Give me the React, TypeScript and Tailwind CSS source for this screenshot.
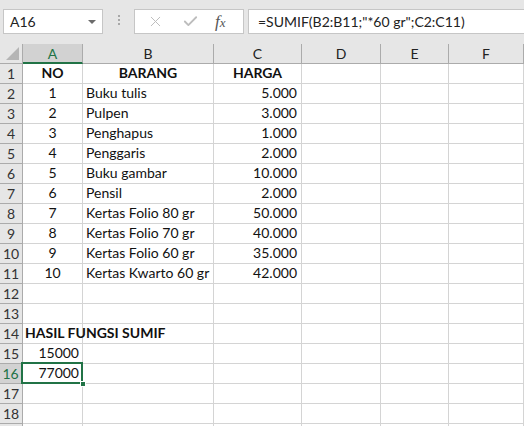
import { Check, X } from "lucide-react";

type Row = {
  a?: string;
  b?: string;
  c?: string;
  kind?: "head" | "label" | "result";
};

const cols = [
  { key: "A", w: "w-[60px]" },
  { key: "B", w: "w-[131px]" },
  { key: "C", w: "w-[88px]" },
  { key: "D", w: "w-[79px]" },
  { key: "E", w: "w-[68px]" },
  { key: "F", w: "flex-1" },
];

const rows: Row[] = [
  { a: "NO", b: "BARANG", c: "HARGA", kind: "head" },
  { a: "1", b: "Buku tulis", c: "5.000" },
  { a: "2", b: "Pulpen", c: "3.000" },
  { a: "3", b: "Penghapus", c: "1.000" },
  { a: "4", b: "Penggaris", c: "2.000" },
  { a: "5", b: "Buku gambar", c: "10.000" },
  { a: "6", b: "Pensil", c: "2.000" },
  { a: "7", b: "Kertas Folio 80 gr", c: "50.000" },
  { a: "8", b: "Kertas Folio 70 gr", c: "40.000" },
  { a: "9", b: "Kertas Folio 60 gr", c: "35.000" },
  { a: "10", b: "Kertas Kwarto 60 gr", c: "42.000" },
  {},
  {},
  { a: "HASIL FUNGSI SUMIF", kind: "label" },
  { a: "15000", kind: "result" },
  { a: "77000", kind: "result" },
  {},
  {},
];

const font = { fontFamily: "Lato, 'Open Sans', sans-serif" };

function FormulaBar() {
  return (
    <div className="flex h-[44px] items-start bg-[#e6e6e6] pt-[9px]">
      <div className="ml-[3px] flex h-[25px] w-[100px] items-center justify-between border border-[#c6c6c6] bg-white pl-[6px] pr-[6px] text-[14px] text-[#222]">
        <span>A16</span>
        <span className="h-0 w-0 border-x-[4px] border-t-[4px] border-x-transparent border-t-[#6b6b6b]" />
      </div>
      <div className="flex w-[31px] flex-col items-center gap-[2px] pt-[6px]">
        <span className="h-[2px] w-[2px] bg-[#a8a8a8]" />
        <span className="h-[2px] w-[2px] bg-[#a8a8a8]" />
        <span className="h-[2px] w-[2px] bg-[#a8a8a8]" />
      </div>
      <div className="flex h-[25px] w-[110px] items-center border border-[#c6c6c6] bg-white">
        <X className="ml-[12px] h-[17px] w-[17px] text-[#bdbdbd]" strokeWidth={1.4} />
        <Check className="ml-[18px] h-[17px] w-[17px] text-[#bdbdbd]" strokeWidth={2.6} />
        <span
          className="ml-[16px] text-[17px] italic text-[#555]"
          style={{ fontFamily: "'Liberation Serif', serif" }}
        >
          f<span className="text-[13px]">x</span>
        </span>
      </div>
      <div className="ml-[4px] flex h-[25px] flex-1 items-center border border-r-0 border-[#c6c6c6] bg-white pl-[9px] text-[14px] text-[#222]">
        =SUMIF(B2:B11;"*60 gr";C2:C11)
      </div>
    </div>
  );
}

function HeaderRow() {
  return (
    <div className="flex h-[20px] bg-[#e6e6e6] text-[14px] leading-[19px]">
      <div className="relative w-[23px] border-r border-b border-[#ababab]">
        <span className="absolute bottom-[3px] right-[3px] h-0 w-0 border-b-[13px] border-l-[13px] border-b-[#b5b5b5] border-l-transparent" />
      </div>
      {cols.map((c) => (
        <div
          key={c.key}
          className={
            c.key === "A"
              ? `${c.w} border-r border-b-2 border-r-[#ababab] border-b-[#217346] bg-[#d2d2d2] text-center text-[#217346]`
              : `${c.w} border-r border-b border-[#ababab] text-center text-[#222]`
          }
        >
          {c.key}
        </div>
      ))}
    </div>
  );
}

function Cell({ row, col, index }: { row: Row; col: string; index: number }) {
  const selected = index === 15 && col === "A";
  let content: React.ReactNode = null;
  let align = "";
  let weight = "";

  if (col === "A" && row.a) {
    content = row.a;
    if (row.kind === "label") {
      align = "justify-start pl-[2px] z-10";
      weight = "font-bold";
    } else if (row.kind === "result") {
      align = "justify-end pr-[3px]";
    } else {
      align = "justify-center";
      weight = row.kind === "head" ? "font-bold" : "";
    }
  }
  if (col === "B" && row.b) {
    content = row.b;
    align = row.kind === "head" ? "justify-center" : "justify-start pl-[3px]";
    weight = row.kind === "head" ? "font-bold" : "";
  }
  if (col === "C" && row.c) {
    content = row.c;
    align = row.kind === "head" ? "justify-center" : "justify-end pr-[4px]";
    weight = row.kind === "head" ? "font-bold" : "";
  }

  const w = cols.find((c) => c.key === col)!.w;
  return (
    <div
      className={`relative flex ${w} items-end whitespace-nowrap border-r border-b border-[#d4d4d4] pb-[1px] ${align} ${weight}`}
    >
      {content}
      {selected && (
        <>
          <span className="pointer-events-none absolute -left-[2px] -top-[2px] h-[22px] w-[62px] border-2 border-[#217346]" />
          <span className="absolute -bottom-[4px] -right-[4px] z-20 h-[6px] w-[6px] border border-white bg-[#217346]" />
        </>
      )}
    </div>
  );
}

export default function App() {
  return (
    <div className="h-[426px] w-[524px] overflow-hidden bg-white" style={font}>
      <FormulaBar />
      <HeaderRow />
      {rows.map((row, i) => {
        const active = i === 15;
        return (
          <div key={i} className="flex h-[20px] text-[14px] leading-[18px] text-[#111]">
            <div
              className={
                active
                  ? "flex w-[23px] items-center justify-center border-r-2 border-b border-r-[#217346] border-b-[#ababab] bg-[#d2d2d2] text-[#217346]"
                  : "flex w-[23px] items-center justify-center border-r border-b border-[#ababab] bg-[#e6e6e6] text-[#333]"
              }
            >
              {i + 1}
            </div>
            {cols.map((c) => (
              <Cell key={c.key} row={row} col={c.key} index={i} />
            ))}
          </div>
        );
      })}
      {/* row 19 peeks in at the bottom edge */}
      <div className="flex h-[20px]">
        <div className="w-[23px] border-r border-[#ababab] bg-[#e6e6e6]" />
        {cols.map((c) => (
          <div key={c.key} className={`${c.w} border-r border-[#d4d4d4]`} />
        ))}
      </div>
    </div>
  );
}
